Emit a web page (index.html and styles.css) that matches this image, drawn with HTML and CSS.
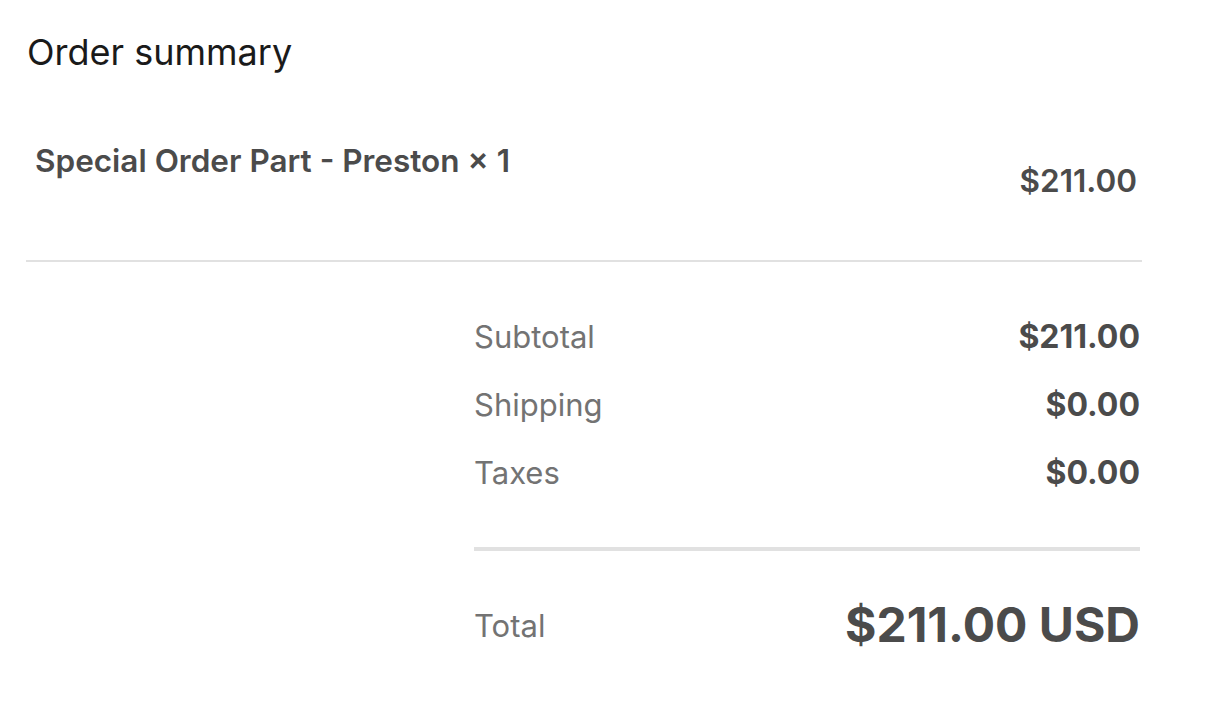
FILE: index.html
```html
<!DOCTYPE html>
<html lang="en">
<head>
    <meta charset="UTF-8">
    <meta name="viewport" content="width=device-width, initial-scale=1.0">
    <title>Order summary</title>
    <link rel="stylesheet" href="styles.css">
</head>
<body>
    <div class="summary">
        <h2 class="summary-title">Order summary</h2>
        <div class="product">
            <span class="product-name">Special Order Part - Preston × 1</span>
            <span class="product-price">$211.00</span>
        </div>
        <div class="totals">
            <div class="line">
                <span class="label">Subtotal</span>
                <span class="amount">$211.00</span>
            </div>
            <div class="line">
                <span class="label">Shipping</span>
                <span class="amount">$0.00</span>
            </div>
            <div class="line">
                <span class="label">Taxes</span>
                <span class="amount">$0.00</span>
            </div>
            <div class="grand-total">
                <span class="label">Total</span>
                <span class="total-amount">$211.00 USD</span>
            </div>
        </div>
    </div>
</body>
</html>
```

FILE: styles.css
```css
body {
    margin: 0;
    font-family: Inter, "Liberation Sans", Arial, sans-serif;
    background-color: #ffffff;
    color: #4b4b4b;
}
.summary {
    width: 1116px;
    padding: 0 0 0 26px;
}
.summary-title {
    margin: 0;
    padding: 30px 0 0 1px;
    font-size: 36px;
    line-height: 44px;
    font-weight: 400;
    color: #1a1a1a;
}
.product {
    display: flex;
    justify-content: space-between;
    padding: 67px 5px 59px 9px;
    border-bottom: 2px solid #e1e1e1;
}
.product-name {
    font-size: 31.5px;
    line-height: 40px;
    font-weight: 600;
}
.product-price {
    padding-top: 20px;
    font-size: 31.5px;
    line-height: 40px;
    font-weight: 600;
}
.totals {
    margin-left: 448px;
    width: 666px;
    padding-top: 55px;
}
.line {
    display: flex;
    justify-content: space-between;
    height: 68px;
    font-size: 31px;
    line-height: 40px;
}
.label {
    color: #737373;
}
.amount {
    font-size: 32px;
    font-weight: 700;
}
.grand-total {
    display: flex;
    justify-content: space-between;
    align-items: center;
    margin-top: 26px;
    padding-top: 46px;
    border-top: 4px solid #e1e1e1;
    font-size: 31px;
}
.total-amount {
    font-size: 48px;
    line-height: 56px;
    font-weight: 700;
}
```
